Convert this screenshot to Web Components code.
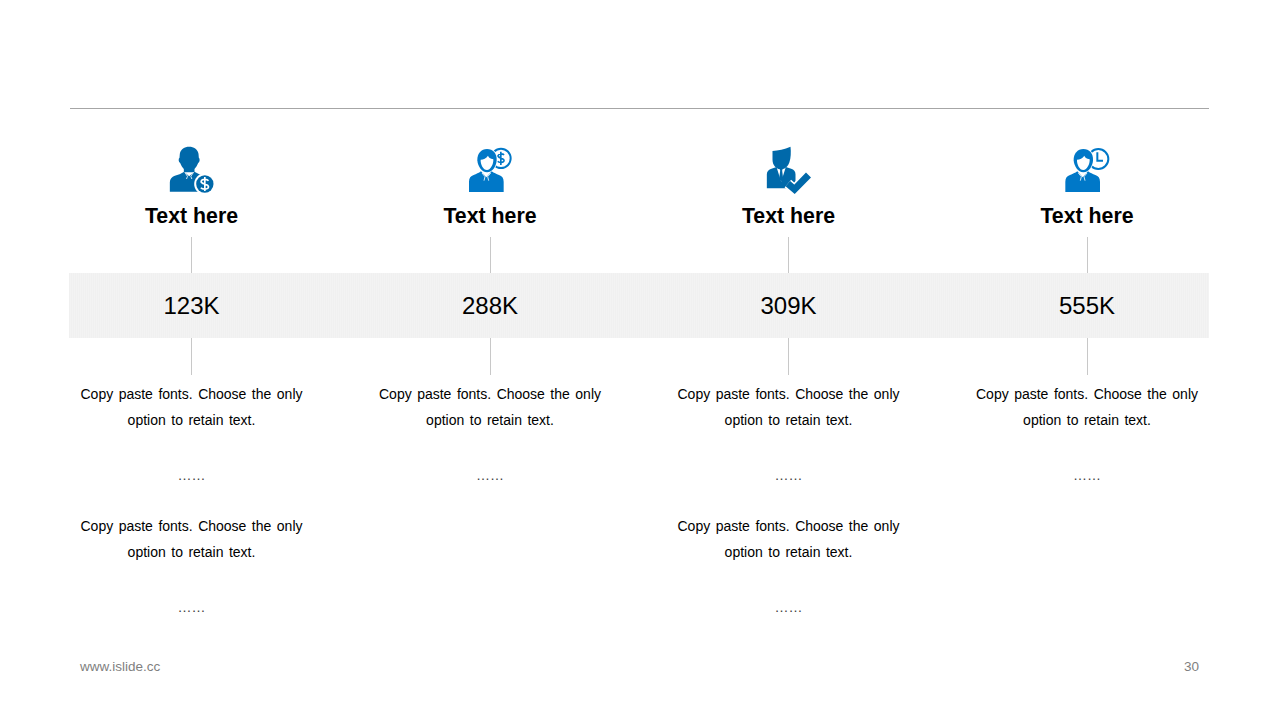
<!DOCTYPE html>
<html>
<head>
<meta charset="utf-8">
<title>Slide 30</title>
<style>
  html, body { margin: 0; padding: 0; background: #fff; }
  body { width: 1280px; height: 720px; overflow: hidden; font-family: "Liberation Sans", Arial, sans-serif; color: #000; }
</style>
</head>
<body>
<slide-page>
  <head-item title="Text here" icon="dollar-badge"></head-item>
  <head-item title="Text here" icon="dollar-bubble"></head-item>
  <head-item title="Text here" icon="check"></head-item>
  <head-item title="Text here" icon="clock"></head-item>

  <span slot="value">123K</span>
  <span slot="value">288K</span>
  <span slot="value">309K</span>
  <span slot="value">555K</span>

  <note-col slot="notes" blocks="2"></note-col>
  <note-col slot="notes" blocks="1"></note-col>
  <note-col slot="notes" blocks="2"></note-col>
  <note-col slot="notes" blocks="1"></note-col>
</slide-page>

<script>
// same head and suit for the two lighter icons, dx moves it sideways
const suited = (dx) => `
  <g transform="translate(${dx} 0)">
    <path d="M82 76c-1-20 12-34 29-34 18 0 30 13 29 34-1 17-12 36-29 36-16 0-28-19-29-36z" stroke="#fff" stroke-width="5" paint-order="stroke"/>
    <path d="M92 74c8 0 17-4 22-12 2 5 6 9 16 11 1 14-8 32-19 32s-20-17-19-31z" fill="#fff"/>
    <path d="M57 171v-31c0-11 5-17 14-20 8-3 15-6 22-11l16 18 16-18c7 5 14 8 22 11 9 3 14 9 14 20v31z" stroke="#fff" stroke-width="3" paint-order="stroke"/>
    <path d="M96 114l9 11-3 12M122 114l-9 11 3 12" fill="none" stroke="#fff" stroke-width="2.5"/>
  </g>`;

// all drawn in 3x coordinates of a 90x66 box, the x offset centres the person on the column
const ICONS = {
  "dollar-badge": { x: -10.5, color: "#0069aa", body: `
    <path d="M116 35c14 0 25 7 28 21l1 12c4 3 3 13-2 16-3 8-7 14-11 18v10h-32v-10c-4-4-8-10-11-18-5-3-6-13-2-16l1-12c3-14 14-21 28-21z"/>
    <path d="M58 170v-28c0-10 6-17 15-20 9-3 20-6 28-12l15 14 16-14c9 6 20 9 28 12 6 2 10 6 12 10v38z"/>
    <path d="M103 112l8 12-3 8M129 112l-8 12 3 8" fill="none" stroke="#fff" stroke-width="2.5"/>
    <circle cx="163" cy="147" r="32" fill="#fff"/>
    <circle cx="163" cy="147" r="26"/>
    <path d="M174 137c-4-5-20-6-22 2-2 10 23 6 22 17-1 8-18 8-23 2M163 126v42" fill="none" stroke="#fff" stroke-width="5"/>` },
  "dollar-bubble": { x: -15, color: "#0078c8", body: `
    <circle cx="153" cy="70" r="29" fill="none" stroke="currentColor" stroke-width="6"/>
    <path d="M162 60c-3-4-16-5-18 2-2 8 19 6 18 15-1 7-15 7-19 2M152.500 50v40" fill="none" stroke="currentColor" stroke-width="5"/>
    ${suited(0)}` },
  "check": { x: -4.5, color: "#0069aa", body: `
    <path d="M81 48c17-2 36-5 54-13 2 16 1 34-3 46-4 13-14 22-25 22-14 0-26-12-26-29z"/>
    <path d="M64 160v-42c0-10 6-14 14-17l15-5 14 44 14-44 16 5c8 3 13 7 13 17v42z"/>
    <path d="M103 101h8l-1 6 3 24-6 9-6-9 3-24z"/>
    <path d="M127 146l20 17 42-43" fill="none" stroke="#fff" stroke-width="30"/>
    <path d="M127 146l20 17 42-43" fill="none" stroke="currentColor" stroke-width="21"/>` },
  "clock": { x: -9, color: "#0078c8", body: `
    <circle cx="160" cy="72" r="30" fill="none" stroke="currentColor" stroke-width="6"/>
    <path d="M157 52v25h17" fill="none" stroke="currentColor" stroke-width="6"/>
    ${suited(4)}` }
};

class SlidePage extends HTMLElement {
  constructor() {
    super();
    this.shadowDOM = this.attachShadow({mode: "open"});
    this.shadowDOM.innerHTML = `
      <style>
        :host { display: flex; flex-direction: column; width: 1280px; height: 720px; box-sizing: border-box; padding: 108px 71px 0 69px; }
        .rule { height: 1px; background: #a6a6a6; margin-left: 1px; }
        .cols { display: flex; justify-content: space-between; padding-left: .5px; }
        .heads { padding-top: 26px; }
        .band { height: 65px; background: repeating-linear-gradient(90deg, #f0f0f0 0 1px, #f3f3f3 1px 2px); align-items: center; }
        .band ::slotted(span) { width: 244px; text-align: center; font-size: 24px; line-height: 67px; }
        footer { margin: auto 10px 0 11px; padding-bottom: 45px; display: flex; justify-content: space-between; font-size: 13.5px; line-height: 16px; color: #7f7f7f; }
      </style>
      <div class="rule"></div>
      <div class="cols heads"><slot></slot></div>
      <div class="cols band"><slot name="value"></slot></div>
      <div class="cols"><slot name="notes"></slot></div>
      <footer><span>www.islide.cc</span><span>30</span></footer>`;
  }
}

class HeadItem extends HTMLElement {
  constructor() {
    super();
    this.shadowDOM = this.attachShadow({mode: "open"});
  }
  connectedCallback() {
    const icon = ICONS[this.getAttribute("icon")];
    this.shadowDOM.innerHTML = `
      <style>
        :host { display: flex; flex-direction: column; align-items: center; width: 244px; }
        svg { display: block; width: 90px; height: 66px; color: ${icon.color}; fill: currentColor; }
        h2 { margin: 3px 0 9px; font-size: 21.33px; line-height: 24px; font-weight: bold; }
        i { display: block; width: 1px; height: 36px; background: #c8c8c8; }
      </style>
      <svg viewBox="${icon.x} 0 270 198">${icon.body}</svg>
      <h2>${this.getAttribute("title")}</h2>
      <i></i>`;
  }
}

class NoteCol extends HTMLElement {
  constructor() {
    super();
    this.shadowDOM = this.attachShadow({mode: "open"});
  }
  connectedCallback() {
    const block = `
      <p>Copy paste fonts. Choose the only<br>option to retain text.</p>
      <p class="dots">……</p>`;
    this.shadowDOM.innerHTML = `
      <style>
        :host { display: flex; flex-direction: column; align-items: center; width: 244px; }
        i { display: block; width: 1px; height: 37px; background: #c8c8c8; margin-bottom: 6px; }
        p { margin: 0; text-align: center; font-size: 14px; line-height: 26px; word-spacing: 1.6px; white-space: nowrap; }
        .dots { margin: 29px 0 25px; color: #404040; }
      </style>
      <i></i>${block.repeat(Number(this.getAttribute("blocks")))}`;
  }
}

customElements.define("slide-page", SlidePage);
customElements.define("head-item", HeadItem);
customElements.define("note-col", NoteCol);
</script>
</body>
</html>
